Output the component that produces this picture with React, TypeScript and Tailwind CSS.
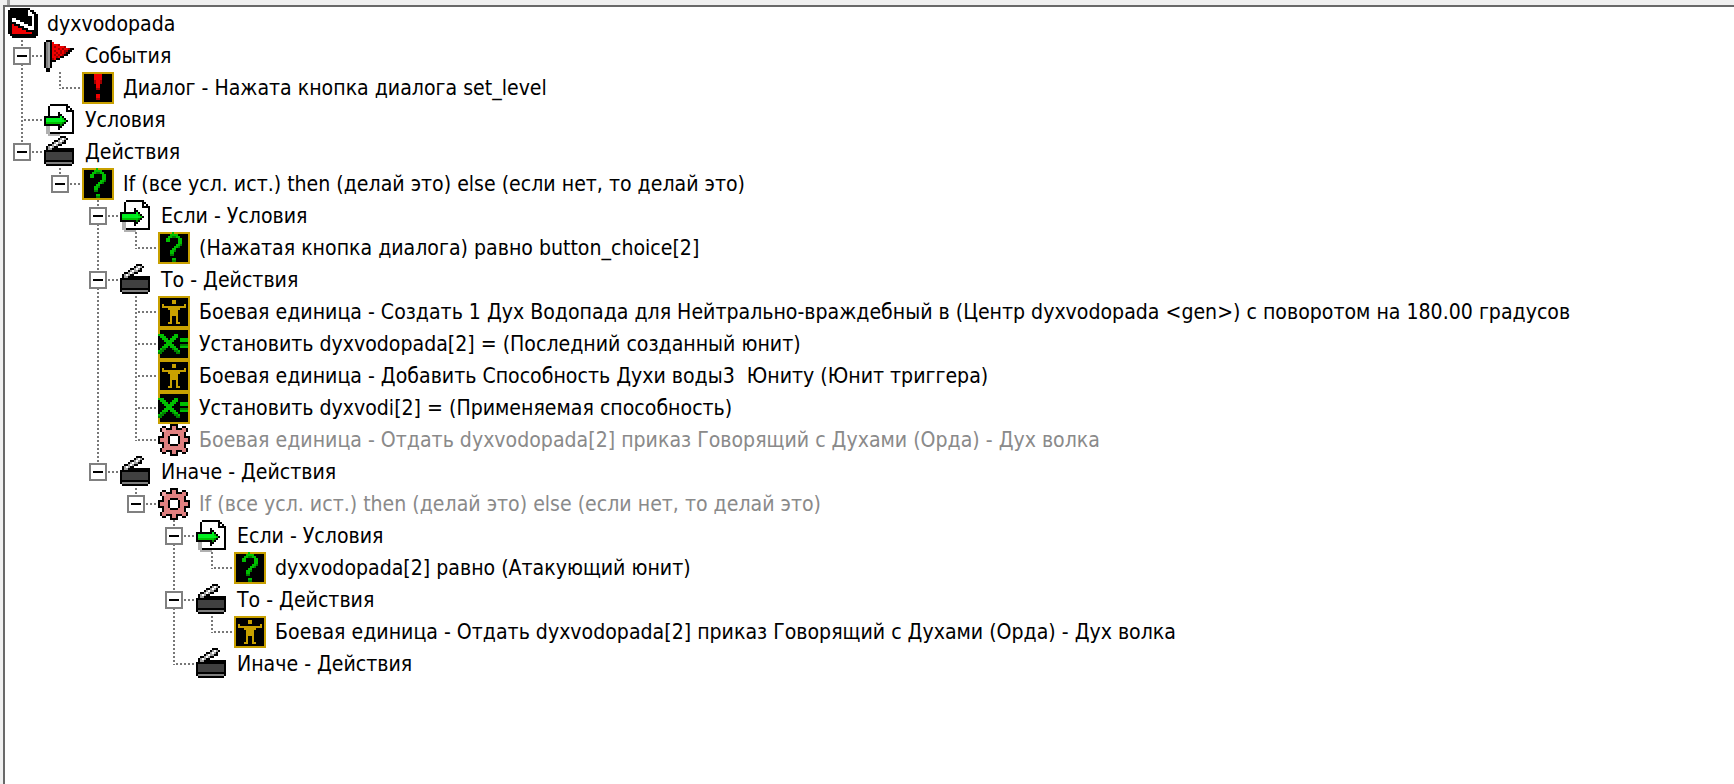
import React from "react";

const COLORS: Record<string, string> = {
  K: "#000000",
  W: "#ffffff",
  R: "#f00000",
  r: "#a00000",
  Y: "#c8a000",
  y: "#8a6e00",
  g: "#00c000",
  d: "#008000",
  l: "#00f020",
  p: "#e08080",
  P: "#f0a0a0",
  D: "#404040",
  G: "#a0a0a0",
  s: "#b0b0b0",
  H: "#808080",
};

function Pixels({ map }: { map: string[] }) {
  const cells: React.ReactNode[] = [];
  map.forEach((row, y) => {
    row.split("").forEach((c, x) => {
      if (COLORS[c]) {
        cells.push(<rect key={x + "-" + y} x={x} y={y} width={1} height={1} fill={COLORS[c]} />);
      }
    });
  });
  return (
    <svg width={32} height={32} viewBox="0 0 16 16" shapeRendering="crispEdges" className="block">
      {cells}
    </svg>
  );
}

const ICONS: Record<string, string[]> = {
  root: [
    "..KKKKKKKKKK....",
    ".KKKKKKKKKKWKK..",
    ".KKKKKKKKKKWWKK.",
    ".KKKKKKKKKKWWWKK",
    ".KKKKKKKKKKKKWKK",
    ".KKWWKKKKKKKKWKK",
    ".KKWWWWKKKKKKWKK",
    ".KKKKWWWWKKKKWKK",
    ".KKRKKKWWWWKKWKK",
    ".KKRRRKKKWWWWWKK",
    ".KKRRRRRKKKWWWKK",
    ".KKRRRRRRRKKKKKK",
    ".KKRRRRRRRRRRKKK",
    "..KKKKKKKKKKKKKK",
    "...KKKKKKKKKKKK.",
    "................",
  ],
  flag: [
    ".KKK............",
    "KHGKR...........",
    "KHGKRRRr........",
    "KHGKRrRRRRr.....",
    "KHGKRRRrRrRRrKK.",
    "KHGKRrRRrRrrKK..",
    "KHGKRRrRrRrKK...",
    "KHGKRrRrRrKK....",
    "KHGKRRrRKK......",
    "KHGKrRKK........",
    "KHGKKK..........",
    "KHGK............",
    "KHGK............",
    "KHGK............",
    ".KK.............",
    ".KK.............",
  ],
  doc: [
    "...KKKKKKKKK....",
    "..KWWWWWWWWKK...",
    "..KWWWWWWWWKWK..",
    "..KWWWWWWWWKKKK.",
    "..KWWWWKWWWWWWK.",
    "..KWWWWKKWWWWWK.",
    "KKKKKKKKlKWWWWK.",
    "KllllllllgKWWWK.",
    "KlllllllllgKWWK.",
    "KggggggggdKWWWK.",
    "KKKKKKKKdKWWWWK.",
    ".ssWWWWKKWWWWWK.",
    ".ssWWWWKWWWWWWK.",
    ".ssWWWWWWWWWWWK.",
    ".ssKKKKKKKKKKKK.",
    "..ssssss........",
  ],
  clap: [
    "........KKK.....",
    ".......KGWGK....",
    ".....KKGWGK.....",
    "....KGWGGKK.....",
    "..KKGWGKK.......",
    ".KGWGKK.........",
    ".KGGKKKKKKKKKKK.",
    "KKKKKKKKKKKKKKK.",
    "KDDDDDDDDDDDDDK.",
    "KDDDDDDDDDDDDDK.",
    "KDDDDDDDDDDDDDK.",
    "KDDDDDDDDDDDDDK.",
    "KKKKKKKKKKKKKKK.",
    "KHHHHHHHHHHHHHK.",
    ".KKKKKKKKKKKKK..",
    "",
  ],
  excl: [
    "YYYYYYYYYYYYYYYY",
    "YKKKKKRRRRKKKKKY",
    "YKKKKKRRRRKKKKKY",
    "YKKKKKRRRRKKKKKY",
    "YKKKKKrRRrKKKKKY",
    "YKKKKKrRRrKKKKKY",
    "YKKKKKKRRKKKKKKY",
    "YKKKKKKRRKKKKKKY",
    "YKKKKKKrrKKKKKKY",
    "YKKKKKKKKKKKKKKY",
    "YKKKKKKKKKKKKKKY",
    "YKKKKKKRRKKKKKKY",
    "YKKKKKKRRKKKKKKY",
    "YKKKKKKrrKKKKKKY",
    "YKKKKKKKKKKKKKKY",
    "YYYYYYYYYYYYYYYY",
  ],
  quest: [
    "YYYYYYYgYYYYYYYY",
    "YKKKKKggggKKKKKY",
    "YKKKKggddggKKKKY",
    "YKKKggKKKKggKKKY",
    "YKKKggKKKKggKKKY",
    "YKKKKKKKKKggKKKY",
    "YKKKKKKKKggdKKKY",
    "YKKKKKKKggdKKKKY",
    "YKKKKKKggKKKKKKY",
    "YKKKKKggdKKKKKKY",
    "YKKKKKggKKKKKKKY",
    "YKKKKKddKKKKKKKY",
    "YKKKKKKKKKKKKKKY",
    "YKKKKKKggKKKKKKY",
    "YKKKKKKddKKKKKKY",
    "YYYYYYYYYYYYYYYY",
  ],
  unit: [
    "YYYYYYYYYYYYYYYY",
    "YKKKKKKKKKKKKKKY",
    "YKKKKKKYYKKKKKKY",
    "YKKKKKKYYKKKKKKY",
    "YKYKKKKKKKKKKYKY",
    "YKYYYYYYYYYYYYKY",
    "YKKKKYYYYYYKKKKY",
    "YKKKKKYYYYKKKKKY",
    "YKKKKKYYYYKKKKKY",
    "YKKKKKYYYYKKKKKY",
    "YKKKKKYKKYKKKKKY",
    "YKKKKKYKKYKKKKKY",
    "YKKKKKYKKYKKKKKY",
    "YKKKKYYKKYYKKKKY",
    "YKKKKKKKKKKKKKKY",
    "YYYYYYYYYYYYYYYY",
  ],
  set: [
    "YYYYYYYYYYYYYYYY",
    "YKKKKKKKKKKKKKKY",
    "YKKKKKKKKKKKKKKY",
    "gggKKKKKggKKKKKY",
    "KgggKKKgggKKKKKY",
    "KKgggKgggKKggggY",
    "KKKgggggKKKggggY",
    "KKKKgggKKKKKKKKY",
    "KKKgggggKKKddddY",
    "KKgggKgggKKggggY",
    "KgddKKKdggKKKKKY",
    "gddKKKKKddgKKKKY",
    "ddKKKKKKKddKKKKY",
    "YKKKKKKKKKKKKKKY",
    "YKKKKKKKKKKKKKKY",
    "YYYYYYYYYYYYYYYY",
  ],
  gear: [
    "......KKKK......",
    "..KK..KppK..KK..",
    ".KPPKKKppKKKppK.",
    ".KPPppppppppppK.",
    "..KppppppppppK..",
    "..KpppKKKKpppK..",
    "KKKppKWWWWKppKKK",
    "KppppKWWWWKppppK",
    "KppppKWWWWKppppK",
    "KKKppKWWWWKppKKK",
    "..KpppKKKKpppK..",
    "..KppppppppppK..",
    ".KppppppppppppK.",
    ".KppKKKppKKKppK.",
    "..KK..KppK..KK..",
    "......KKKK......",
  ],
};

type Node = {
  icon: string;
  text: string;
  muted?: boolean;
  children?: Node[];
};

const TREE: Node = {
  icon: "root",
  text: "dyxvodopada",
  children: [
    {
      icon: "flag",
      text: "События",
      children: [{ icon: "excl", text: "Диалог - Нажата кнопка диалога set_level" }],
    },
    { icon: "doc", text: "Условия" },
    {
      icon: "clap",
      text: "Действия",
      children: [
        {
          icon: "quest",
          text: "If (все усл. ист.) then (делай это) else (если нет, то делай это)",
          children: [
            {
              icon: "doc",
              text: "Если - Условия",
              children: [{ icon: "quest", text: "(Нажатая кнопка диалога) равно button_choice[2]" }],
            },
            {
              icon: "clap",
              text: "То - Действия",
              children: [
                {
                  icon: "unit",
                  text: "Боевая единица - Создать 1 Дух Водопада для Нейтрально-враждебный в (Центр dyxvodopada <gen>) с поворотом на 180.00 градусов",
                },
                { icon: "set", text: "Установить dyxvodopada[2] = (Последний созданный юнит)" },
                { icon: "unit", text: "Боевая единица - Добавить Способность Духи воды3  Юниту (Юнит триггера)" },
                { icon: "set", text: "Установить dyxvodi[2] = (Применяемая способность)" },
                {
                  icon: "gear",
                  muted: true,
                  text: "Боевая единица - Отдать dyxvodopada[2] приказ Говорящий с Духами (Орда) - Дух волка",
                },
              ],
            },
            {
              icon: "clap",
              text: "Иначе - Действия",
              children: [
                {
                  icon: "gear",
                  muted: true,
                  text: "If (все усл. ист.) then (делай это) else (если нет, то делай это)",
                  children: [
                    {
                      icon: "doc",
                      text: "Если - Условия",
                      children: [{ icon: "quest", text: "dyxvodopada[2] равно (Атакующий юнит)" }],
                    },
                    {
                      icon: "clap",
                      text: "То - Действия",
                      children: [
                        {
                          icon: "unit",
                          text: "Боевая единица - Отдать dyxvodopada[2] приказ Говорящий с Духами (Орда) - Дух волка",
                        },
                      ],
                    },
                    { icon: "clap", text: "Иначе - Действия" },
                  ],
                },
              ],
            },
          ],
        },
      ],
    },
  ],
};

const DOT = "#777777";

function Guide({ kind, expander }: { kind: "none" | "pass" | "tee" | "elbow"; expander?: boolean }) {
  return (
    <svg width={38} height={32} shapeRendering="crispEdges" className="block shrink-0 overflow-visible">
      {kind !== "none" && (
        <line
          x1={19}
          y1={0}
          x2={19}
          y2={kind === "elbow" ? 17 : 32}
          stroke={DOT}
          strokeWidth={2}
          strokeDasharray="2 2"
        />
      )}
      {(kind === "tee" || kind === "elbow") && (
        <line x1={21} y1={16} x2={43} y2={16} stroke={DOT} strokeWidth={2} strokeDasharray="2 2" />
      )}
      {expander && (
        <g>
          <rect x={11} y={8} width={16} height={16} fill="#ffffff" stroke="#808080" strokeWidth={2} />
          <rect x={14} y={15} width={10} height={2} fill="#000000" />
        </g>
      )}
    </svg>
  );
}

function Row({ node, trail, last, isRoot }: { node: Node; trail: boolean[]; last: boolean; isRoot?: boolean }) {
  const kids = node.children ?? [];
  return (
    <>
      <div className="flex h-8 items-center">
        {trail.map((open, i) => (
          <Guide key={i} kind={open ? "pass" : "none"} />
        ))}
        {!isRoot && <Guide kind={last ? "elbow" : "tee"} expander={kids.length > 0} />}
        <div className="relative flex h-8 w-[38px] shrink-0 justify-center">
          <Pixels map={ICONS[node.icon]} />
        </div>
        <span
          className={
            "ml-[6px] mb-px whitespace-pre font-['DejaVu_Sans',sans-serif] [font-stretch:condensed] text-[21.1px] leading-7 " +
            (node.muted ? "text-[#8a8a8a]" : "text-black")
          }
        >
          {node.text}
        </span>
      </div>
      {kids.map((k, i) => (
        <Row
          key={i}
          node={k}
          trail={isRoot ? [] : [...trail, !last]}
          last={i === kids.length - 1}
        />
      ))}
    </>
  );
}

export default function App() {
  return (
    <div className="relative h-[784px] w-[1734px] overflow-hidden bg-[#f0f0f0] pl-[3px] pt-[5px]">
      <div className="absolute left-[7px] top-0 h-[5px] w-[3px] bg-[#a0a0a0]" />
      <div className="h-[779px] border-l-2 border-t-2 border-[#696969] bg-white pt-px">
        <div className="-ml-[2px]">
          <Row node={TREE} trail={[]} last isRoot />
        </div>
      </div>
    </div>
  );
}
